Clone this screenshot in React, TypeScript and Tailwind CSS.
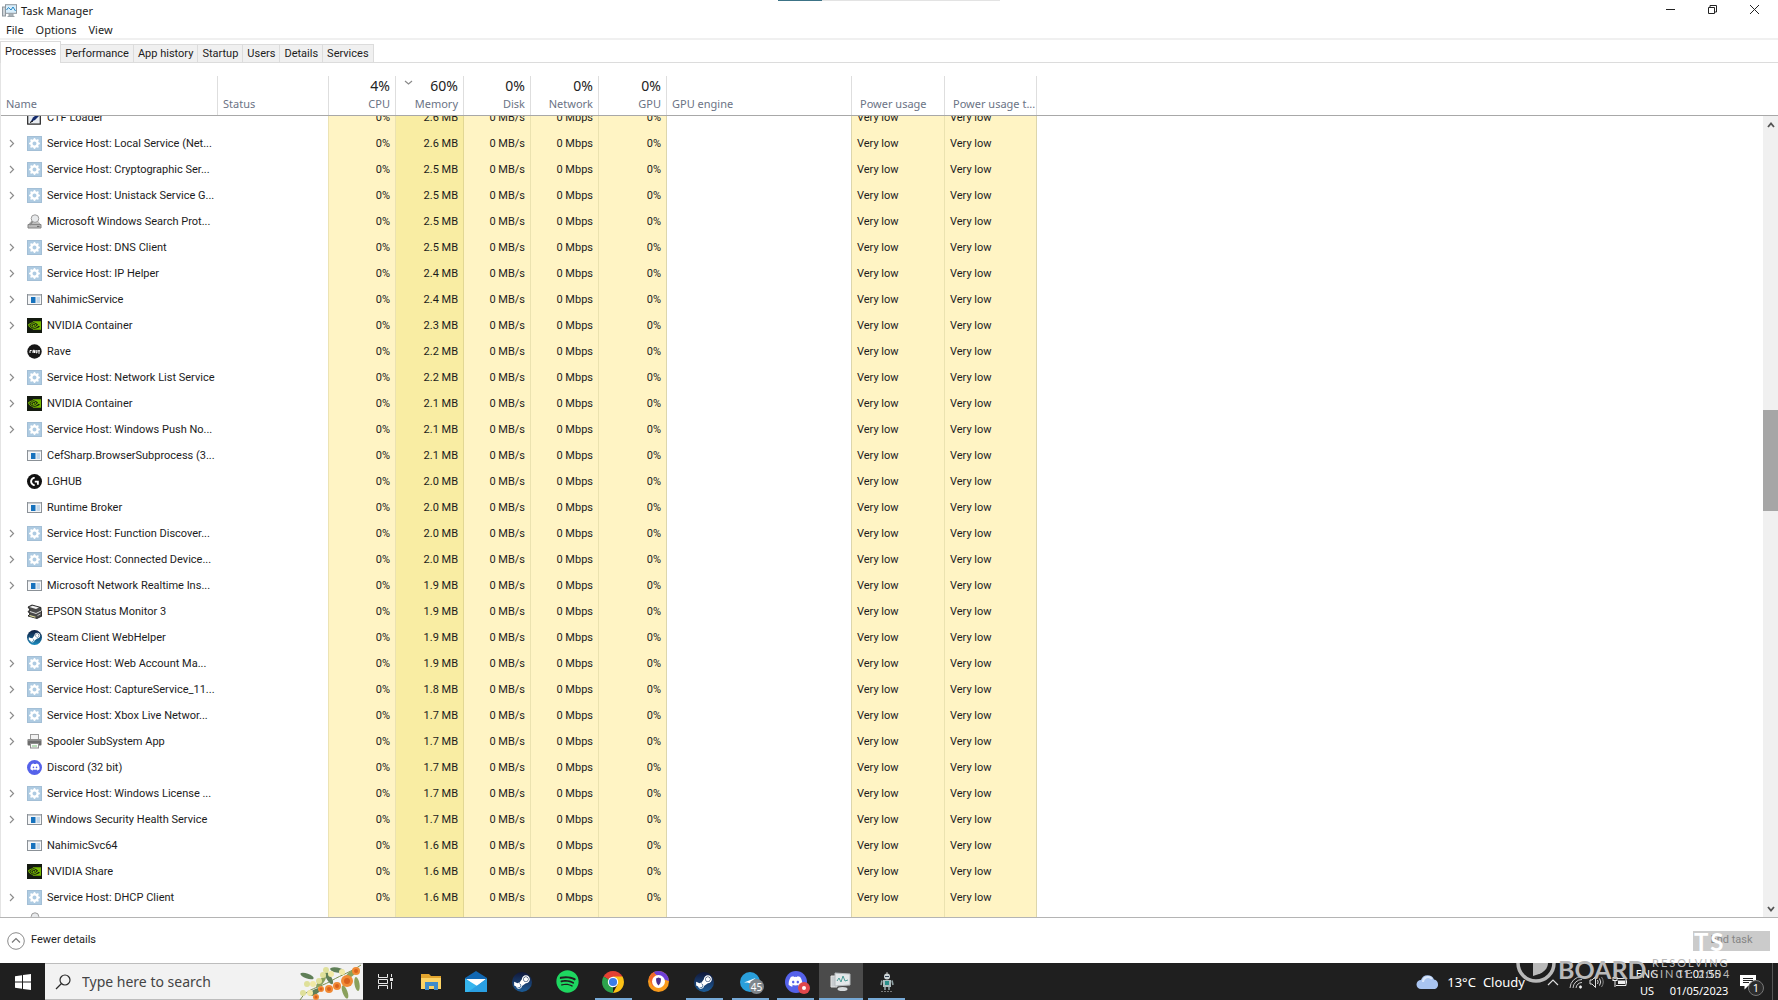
import { useLayoutEffect, useRef, useState } from "react";
import type { ReactNode } from "react";
import { BsGearFill } from "react-icons/bs";
import { FaDiscord, FaSpotify, FaSteamSymbol } from "react-icons/fa";
import { SiLogitechg, SiNvidia } from "react-icons/si";

type IconName =
  | "gear" | "app" | "nvidia" | "rave" | "lghub" | "search" | "ctf"
  | "epson" | "steam" | "printer" | "discord";

type Process = { name: string; icon: IconName; memory: string; group?: boolean };

const processes: Process[] = [
  { name: "CTF Loader", icon: "ctf", memory: "2.6 MB" },
  { name: "Service Host: Local Service (Net...", icon: "gear", memory: "2.6 MB", group: true },
  { name: "Service Host: Cryptographic Ser...", icon: "gear", memory: "2.5 MB", group: true },
  { name: "Service Host: Unistack Service G...", icon: "gear", memory: "2.5 MB", group: true },
  { name: "Microsoft Windows Search Prot...", icon: "search", memory: "2.5 MB" },
  { name: "Service Host: DNS Client", icon: "gear", memory: "2.5 MB", group: true },
  { name: "Service Host: IP Helper", icon: "gear", memory: "2.4 MB", group: true },
  { name: "NahimicService", icon: "app", memory: "2.4 MB", group: true },
  { name: "NVIDIA Container", icon: "nvidia", memory: "2.3 MB", group: true },
  { name: "Rave", icon: "rave", memory: "2.2 MB" },
  { name: "Service Host: Network List Service", icon: "gear", memory: "2.2 MB", group: true },
  { name: "NVIDIA Container", icon: "nvidia", memory: "2.1 MB", group: true },
  { name: "Service Host: Windows Push No...", icon: "gear", memory: "2.1 MB", group: true },
  { name: "CefSharp.BrowserSubprocess (3...", icon: "app", memory: "2.1 MB" },
  { name: "LGHUB", icon: "lghub", memory: "2.0 MB" },
  { name: "Runtime Broker", icon: "app", memory: "2.0 MB" },
  { name: "Service Host: Function Discover...", icon: "gear", memory: "2.0 MB", group: true },
  { name: "Service Host: Connected Device...", icon: "gear", memory: "2.0 MB", group: true },
  { name: "Microsoft Network Realtime Ins...", icon: "app", memory: "1.9 MB", group: true },
  { name: "EPSON Status Monitor 3", icon: "epson", memory: "1.9 MB" },
  { name: "Steam Client WebHelper", icon: "steam", memory: "1.9 MB" },
  { name: "Service Host: Web Account Ma...", icon: "gear", memory: "1.9 MB", group: true },
  { name: "Service Host: CaptureService_11...", icon: "gear", memory: "1.8 MB", group: true },
  { name: "Service Host: Xbox Live Networ...", icon: "gear", memory: "1.7 MB", group: true },
  { name: "Spooler SubSystem App", icon: "printer", memory: "1.7 MB", group: true },
  { name: "Discord (32 bit)", icon: "discord", memory: "1.7 MB" },
  { name: "Service Host: Windows License ...", icon: "gear", memory: "1.7 MB", group: true },
  { name: "Windows Security Health Service", icon: "app", memory: "1.7 MB", group: true },
  { name: "NahimicSvc64", icon: "app", memory: "1.6 MB" },
  { name: "NVIDIA Share", icon: "nvidia", memory: "1.6 MB" },
  { name: "Service Host: DHCP Client", icon: "gear", memory: "1.6 MB", group: true },
];

const usage = [
  { label: "CPU", total: "4%" },
  { label: "Memory", total: "60%" },
  { label: "Disk", total: "0%" },
  { label: "Network", total: "0%" },
  { label: "GPU", total: "0%" },
];

const tabs = ["Processes", "Performance", "App history", "Startup", "Users", "Details", "Services"];

function ProcessIcon({ name }: { name: IconName }) {
  switch (name) {
    case "gear":
      return (
        <span className="flex size-[15px] shrink-0 items-center justify-center border border-[#a3bfd6] bg-[#aecbe2] text-white">
          <BsGearFill size={11} />
        </span>
      );
    case "nvidia":
      return (
        <span className="flex size-[15px] shrink-0 items-center justify-center bg-[#141a10] text-[#76b900]">
          <SiNvidia size={13} />
        </span>
      );
    case "lghub":
      return (
        <span className="flex size-[15px] shrink-0 items-center justify-center rounded-full bg-[#111] text-white">
          <SiLogitechg size={9} />
        </span>
      );
    case "steam":
      return (
        <span className="flex size-[15px] shrink-0 items-center justify-center rounded-full bg-linear-to-b from-[#0b1b3d] to-[#1b8dc0] text-white">
          <FaSteamSymbol size={13} />
        </span>
      );
    case "discord":
      return (
        <span className="flex size-[15px] shrink-0 items-center justify-center rounded-full bg-[#5562ea] text-white">
          <FaDiscord size={10} />
        </span>
      );
    case "app":
      return (
        <svg className="shrink-0" width="15" height="15" viewBox="0 0 15 15">
          <rect x="0.5" y="2.5" width="14" height="10" fill="#f4f6f8" stroke="#8b9197" />
          <rect x="1" y="2" width="13" height="1.6" fill="#a7adb3" />
          <rect x="4" y="5" width="4.5" height="6" fill="#1672bd" />
          <path d="M9.5 6h3.5M9.5 8h3.5M9.5 10h3.5" stroke="#8fb8dc" />
        </svg>
      );
    case "rave":
      return (
        <svg className="shrink-0" width="15" height="15" viewBox="0 0 15 15">
          <circle cx="7.5" cy="7.5" r="7.2" fill="#161616" />
          <path d="M3 9V6.5h1.6M6 9V6.3h1.5V9M6 7.8h1.5M9 6v2.8h1V6M11.2 6.5h1.6M11.2 7.7h1.6M11.2 9h1.6" fill="none" stroke="#fff" strokeWidth="1" />
        </svg>
      );
    case "search":
      return (
        <svg className="shrink-0" width="15" height="15" viewBox="0 0 15 15">
          <path d="M1 10.5h13v3.5H1z" fill="#b9b9b9" stroke="#828282" />
          <path d="M2 10l2-2.5h7L13 10z" fill="#c9c9c9" stroke="#999" strokeWidth="0.5" />
          <circle cx="8" cy="4.6" r="3.8" fill="#e8eaec" stroke="#9a9a9a" />
          <path d="M5.5 7.5L3 11" stroke="#8a8a8a" strokeWidth="1.6" />
          <path d="M10 12.4h2.5" stroke="#666" />
        </svg>
      );
    case "ctf":
      return (
        <svg className="shrink-0" width="15" height="15" viewBox="0 0 15 15">
          <rect x="0.7" y="0.7" width="12.6" height="13.4" fill="#e9edf2" stroke="#222" strokeWidth="1.2" />
          <path d="M14.5 1L6 7.5 3.5 12 8 10l7-7z" fill="#132a6b" />
          <path d="M3 12.5l3-1.5" stroke="#000" />
        </svg>
      );
    case "epson":
      return (
        <svg className="shrink-0" width="15" height="15" viewBox="0 0 15 15">
          <path d="M1 3l4-2 9 2.5v3L15 8v4l-5 2.5L1 12l2-2-2-2.5 2-1.5z" fill="#4a4a4a" stroke="#111" strokeWidth="0.8" />
          <path d="M2.5 3l3-1.2L12 3.6 9 5z" fill="#f2f2f2" />
          <path d="M3 7.5l6 2 5-2.5" fill="none" stroke="#ddd" />
          <path d="M2.5 11.5l6 1.8" stroke="#e4e4a0" strokeWidth="1.2" />
          <path d="M10.5 11.5l3-1.5" stroke="#bbb" />
        </svg>
      );
    case "printer":
      return (
        <svg className="shrink-0" width="15" height="15" viewBox="0 0 15 15">
          <rect x="3.5" y="0.5" width="8" height="5" fill="#f3f3f3" stroke="#9b9b9b" />
          <rect x="0.5" y="5" width="14" height="6.5" rx="1" fill="#6d6d6d" />
          <rect x="1" y="5" width="13" height="2" fill="#8f8f8f" />
          <rect x="3.5" y="9.5" width="8" height="4.5" fill="#fafafa" stroke="#8d8d8d" />
          <path d="M5 12h5" stroke="#7ac27a" />
        </svg>
      );
  }
}

function MonitorIcon() {
  return (
    <svg width="15" height="14" viewBox="0 0 15 14">
      <rect x="0.5" y="3" width="3" height="9" fill="#cfd4d8" stroke="#8e979e" />
      <rect x="3.5" y="0.7" width="11" height="8.6" fill="#d9eefb" stroke="#8e979e" />
      <path d="M4.5 6l2-2.5 2.5 2.5L11 3l2.5 4" fill="none" stroke="#2587c4" />
      <path d="M7 10h4v2H7zM5.5 12.5h7" fill="#b9c0c5" stroke="#9aa3a9" />
    </svg>
  );
}

function TitleBar() {
  return (
    <div className="relative flex h-[22px] items-center pl-0.5">
      <MonitorIcon />
      <span className="ml-1 text-[11px] leading-4">Task Manager</span>
      <div className="absolute top-0 left-1/2 flex h-px w-[222px] -translate-x-1/2 bg-[#e3e3e3]">
        <div className="w-11 bg-[#3c7386]" />
      </div>
      <div className="ml-auto flex h-full items-start pr-[3px]">
        <button aria-label="Minimize" className="flex h-[18px] w-[42px] items-center justify-center">
          <svg width="11" height="11" viewBox="0 0 11 11"><path d="M1 5.5h9" stroke="#222" /></svg>
        </button>
        <button aria-label="Restore" className="flex h-[18px] w-[42px] items-center justify-center">
          <svg width="11" height="11" viewBox="0 0 11 11" fill="none" stroke="#222">
            <path d="M1.5 3.5h6v6h-6zM3 3V1.5h6.5V8H8" />
          </svg>
        </button>
        <button aria-label="Close" className="flex h-[18px] w-[42px] items-center justify-center">
          <svg width="11" height="11" viewBox="0 0 11 11"><path d="M1 1l9 9M10 1l-9 9" stroke="#222" /></svg>
        </button>
      </div>
    </div>
  );
}

function Tabs() {
  const [active, setActive] = useState("Processes");
  return (
    <div role="tablist" className="flex h-[23px] items-end border-b border-[#dcdcdc] font-[Roboto,sans-serif] text-[11px]">
      {tabs.map((tab) => (
        <button
          key={tab}
          role="tab"
          aria-selected={tab === active}
          onClick={() => setActive(tab)}
          className={
            tab === active
              ? "-mb-px h-[22px] border border-b-0 border-[#dcdcdc] bg-white px-1 pb-0.5 leading-4"
              : "h-[18px] border-t border-r border-[#dcdcdc] bg-[#f0f0f0] px-1 leading-4"
          }
        >
          {tab}
        </button>
      ))}
    </div>
  );
}

const headCell = "sticky top-0 z-10 h-[53px] border-b border-[#a8a8a8] bg-white p-0 align-bottom font-normal text-[#6b7385]";
const headInner = "flex h-[39px] flex-col justify-end border-r border-[#dedede] pb-[3px] leading-4";

function ProcessTable() {
  const scroller = useRef<HTMLDivElement>(null);

  useLayoutEffect(() => {
    if (scroller.current) scroller.current.scrollTop = 12;
  }, []);

  return (
    <div className="flex min-h-0 flex-1 border-b border-[#b4b4b4]">
      <div ref={scroller} className="min-w-0 flex-1 overflow-hidden border-l border-[#e4e4e4]">
        <table className="w-full table-fixed border-separate border-spacing-0 text-[11px]">
          <colgroup>
            <col className="w-[217px]" />
            <col className="w-[111px]" />
            <col className="w-[67px]" />
            <col className="w-[68px]" />
            <col className="w-[67px]" />
            <col className="w-[68px]" />
            <col className="w-[68px]" />
            <col className="w-[185px]" />
            <col className="w-[93px]" />
            <col className="w-[92px]" />
            <col />
          </colgroup>
          <thead>
            <tr>
              <th className={headCell}><div className={`${headInner} pl-[5px] text-left`}>Name</div></th>
              <th className={headCell}><div className={`${headInner} pl-[5px] text-left`}>Status</div></th>
              {usage.map((u) => (
                <th key={u.label} className={headCell}>
                  <div className={`${headInner} relative pr-[5px] text-right`}>
                    {u.label === "Memory" && (
                      <svg className="absolute top-1 left-2" width="9" height="6" viewBox="0 0 9 6">
                        <path d="M1 1l3.5 3L8 1" fill="none" stroke="#8a8a8a" strokeWidth="1.2" />
                      </svg>
                    )}
                    <span className="text-[14px] leading-5 text-[#222]">{u.total}</span>
                    {u.label}
                  </div>
                </th>
              ))}
              <th className={headCell}><div className={`${headInner} pl-[5px] text-left`}>GPU engine</div></th>
              <th className={headCell}><div className={`${headInner} pl-2 text-left`}>Power usage</div></th>
              <th className={headCell}><div className={`${headInner} pl-2 text-left`}>Power usage t...</div></th>
              <th className={headCell} />
            </tr>
          </thead>
          <tbody className="font-[Roboto,sans-serif] text-[#1c1c1c]">
            {processes.map((p, i) => (
              <tr key={i} className="h-[26px]">
                <td className="p-0">
                  <div className="flex h-[26px] items-center whitespace-nowrap">
                    <span className="flex w-[26px] shrink-0 pl-2">
                      {p.group && (
                        <button aria-label={`Expand ${p.name}`}>
                          <svg width="6" height="9" viewBox="0 0 6 9">
                            <path d="M1 1l3.5 3.5L1 8" fill="none" stroke="#8d8d8d" strokeWidth="1.2" />
                          </svg>
                        </button>
                      )}
                    </span>
                    <ProcessIcon name={p.icon} />
                    <span className="ml-[5px] pt-0.5">{p.name}</span>
                  </div>
                </td>
                <td className="border-r border-[#ece3b4] p-0" />
                <td className="border-r border-[#ebe2b0] bg-[#fff4c4] p-0 pt-0.5 pr-[5px] text-right">0%</td>
                <td className="border-r border-[#e2d793] bg-[#f9eda3] p-0 pt-0.5 pr-[5px] text-right">{p.memory}</td>
                <td className="border-r border-[#ebe2b0] bg-[#fff4c4] p-0 pt-0.5 pr-[5px] text-right">0 MB/s</td>
                <td className="border-r border-[#ebe2b0] bg-[#fff4c4] p-0 pt-0.5 pr-[5px] text-right">0 Mbps</td>
                <td className="border-r border-[#ddd6ac] bg-[#fff4c4] p-0 pt-0.5 pr-[5px] text-right">0%</td>
                <td className="border-r border-[#ddd6ac] p-0" />
                <td className="border-r border-[#ebe2b0] bg-[#fff4c4] p-0 pt-0.5 pl-[5px]">Very low</td>
                <td className="border-r border-[#ddd6ac] bg-[#fff4c4] p-0 pt-0.5 pl-[5px]">Very low</td>
                <td className="p-0" />
              </tr>
            ))}
            {/* next row, only its top edge is in view */}
            <tr className="h-[26px]">
              <td className="p-0 align-top"><div className="flex pt-0.5 pl-[26px]"><ProcessIcon name="search" /></div></td>
              <td className="border-r border-[#ece3b4] p-0" />
              <td className="border-r border-[#ebe2b0] bg-[#fff4c4] p-0" />
              <td className="border-r border-[#e2d793] bg-[#f9eda3] p-0" />
              <td className="border-r border-[#ebe2b0] bg-[#fff4c4] p-0" />
              <td className="border-r border-[#ebe2b0] bg-[#fff4c4] p-0" />
              <td className="border-r border-[#ddd6ac] bg-[#fff4c4] p-0" />
              <td className="border-r border-[#ddd6ac] p-0" />
              <td className="border-r border-[#ebe2b0] bg-[#fff4c4] p-0" />
              <td className="border-r border-[#ddd6ac] bg-[#fff4c4] p-0" />
              <td className="p-0" />
            </tr>
          </tbody>
        </table>
      </div>
      <div className="flex w-[15px] flex-col">
        <div className="h-[53px] border-b border-[#a8a8a8]" />
        <div className="flex flex-1 flex-col bg-[#f0f0f0]">
          <button aria-label="Scroll up" className="flex h-[17px] items-center justify-center">
            <svg width="8" height="6" viewBox="0 0 8 6"><path d="M1 5l3-3.5L7 5" fill="none" stroke="#555" strokeWidth="1.8" /></svg>
          </button>
          <div className="grow-[277]" />
          <div className="grow-[101] bg-[#a6a6a6]" />
          <div className="grow-[389]" />
          <button aria-label="Scroll down" className="flex h-[17px] items-center justify-center">
            <svg width="8" height="6" viewBox="0 0 8 6"><path d="M1 1l3 3.5L7 1" fill="none" stroke="#555" strokeWidth="1.8" /></svg>
          </button>
        </div>
      </div>
    </div>
  );
}

function Flowers() {
  const leaves = [[8, 12, 20], [22, 18, -50], [38, 6, 10], [46, 28, 70], [16, 28, -30], [52, 10, -40], [30, 14, 60], [58, 20, 80]];
  const orange = [[48, 17, 6], [38, 22, 4], [30, 25, 4], [22, 25, 3], [17, 33, 3], [57, 7, 4]];
  const cream = [[8, 20], [14, 20], [4, 29], [11, 29], [27, 6], [32, 10], [24, 11], [43, 8], [20, 17]];
  return (
    <svg className="shrink-0" width="64" height="36" viewBox="0 0 64 36">
      <path d="M1 36C8 24 20 24 32 17S52 8 62 1" fill="none" stroke="#7d8f4e" />
      {leaves.map(([x, y, r], i) => (
        <ellipse key={i} cx={x} cy={y} rx="7" ry="2.5" fill={i % 2 ? "#8aa05c" : "#5f7f57"} transform={`rotate(${r} ${x} ${y})`} />
      ))}
      {cream.map(([x, y], i) => (
        <circle key={i} cx={x} cy={y} r="3" fill={i % 2 ? "#f1e9a5" : "#dfe09a"} />
      ))}
      {orange.map(([x, y, r], i) => (
        <g key={i}>
          <circle cx={x} cy={y} r={r} fill="#f08a35" />
          <circle cx={x} cy={y} r={r / 2} fill="#d8601c" />
        </g>
      ))}
    </svg>
  );
}

function SteamBadge() {
  return (
    <span className="flex size-5 items-center justify-center rounded-full bg-linear-to-b from-[#10183a] to-[#1a5d99] text-white">
      <FaSteamSymbol size={18} />
    </span>
  );
}

function TaskButton({ label, running, active, children }: { label: string; running?: boolean; active?: boolean; children: ReactNode }) {
  return (
    <button
      aria-label={label}
      className={`relative flex h-full w-11 items-center justify-center ${active ? "bg-[#4b4b4b]" : ""}`}
    >
      {children}
      {running && <span className={`absolute bottom-0 h-0.5 bg-[#76a9d6] ${active ? "w-full" : "w-[37px]"}`} />}
    </button>
  );
}

function TaskbarApps() {
  return (
    <div className="flex h-full w-[546px] justify-between">
      <TaskButton label="Task View">
        <svg width="17" height="15" viewBox="0 0 17 15" fill="none" stroke="#e8e8e8">
          <path d="M1.5 0v3.5h9V0M1.5 15v-3.5h9V15M1.5 5.5h9v4h-9zM14.5 0v3M14.5 8v7" />
          <rect x="13.5" y="4.5" width="2" height="2" fill="#e8e8e8" />
        </svg>
      </TaskButton>
      <TaskButton label="File Explorer">
        <svg width="20" height="18" viewBox="0 0 20 18">
          <path d="M0 1h8l2 2h10v13H0z" fill="#e3a52e" />
          <path d="M0 5h20v11H0z" fill="#fcd365" />
          <path d="M4 9h13v8h-4v-4H8v4H4z" fill="#3f8ccb" />
        </svg>
      </TaskButton>
      <TaskButton label="Mail">
        <svg width="22" height="21" viewBox="0 0 22 21">
          <path d="M0 7l11-7 11 7v14H0z" fill="#1167b1" />
          <path d="M1 8h20l-10 8z" fill="#fff" />
          <path d="M0 7.5L22 21H0z" fill="#35b5ee" />
          <path d="M22 7.5V21H3z" fill="#2a9fe2" />
        </svg>
      </TaskButton>
      <TaskButton label="Steam"><SteamBadge /></TaskButton>
      <TaskButton label="Spotify"><FaSpotify size={23} color="#1ed760" /></TaskButton>
      <TaskButton label="Google Chrome" running>
        <svg width="22" height="22" viewBox="0 0 22 22">
          <path d="M11 11L1.5 5.5A11 11 0 0 1 20.5 5.5z" fill="#e24133" />
          <path d="M11 11L1.5 5.5A11 11 0 0 0 11 22z" fill="#2da24c" />
          <path d="M11 5.5h9.5A11 11 0 0 1 11 22l4.5-8.5z" fill="#fbc116" />
          <circle cx="11" cy="11" r="5.2" fill="#fff" />
          <circle cx="11" cy="11" r="4.1" fill="#3b7de9" />
        </svg>
      </TaskButton>
      <TaskButton label="Secure Browser">
        <svg width="21" height="21" viewBox="0 0 21 21">
          <circle cx="10.5" cy="10.5" r="10.5" fill="#f89a1c" />
          <path d="M5 1.5A10.5 10.5 0 0 1 21 10L14 8z" fill="#6e3fd6" />
          <path d="M1 8A10 10 0 0 1 6 1l3 6-4 9z" fill="#f2662b" />
          <circle cx="10.5" cy="10.5" r="6.5" fill="#fff" />
          <path d="M8 7.5l2.5-1 2.5 1c0 4-1 5.5-2.5 7C9 13 8 11.5 8 7.5z" fill="#4b2d8c" />
        </svg>
      </TaskButton>
      <TaskButton label="Steam window" running><SteamBadge /></TaskButton>
      <TaskButton label="Telegram" running>
        <svg width="20" height="20" viewBox="0 0 20 20">
          <circle cx="10" cy="10" r="10" fill="#2a9fdb" />
          <path d="M4 10.5L15.5 6l-5 5.5-3-1z" fill="#fff" />
        </svg>
        <span className="absolute right-2 bottom-1.5 flex size-[15px] items-center justify-center rounded-full bg-[#80868b] text-[10px] leading-none text-white">45</span>
      </TaskButton>
      <TaskButton label="Discord" running>
        <span className="flex size-[22px] items-center justify-center rounded-full bg-[#5562ea] text-white"><FaDiscord size={15} /></span>
        <span className="absolute right-2 bottom-1.5 flex size-3 items-center justify-center rounded-full bg-[#e0474c]">
          <span className="size-1 rounded-full bg-white" />
        </span>
      </TaskButton>
      <TaskButton label="Task Manager" running active>
        <svg width="22" height="20" viewBox="0 0 22 20">
          <path d="M1 4h6v11H1z" fill="#c8cccf" stroke="#e4e4e4" />
          <path d="M5 1l15 1v11L5 14z" fill="#e3e7e9" stroke="#b4b9bc" />
          <path d="M7 9l2-3 2 4 2-6 2 5 3-1" fill="none" stroke="#4c9b96" />
          <ellipse cx="12.5" cy="17" rx="5" ry="2" fill="#d5d9db" />
        </svg>
      </TaskButton>
      <TaskButton label="Robot" running>
        <svg width="16" height="20" viewBox="0 0 16 20">
          <path d="M8 0v2" stroke="#bbb" />
          <circle cx="8" cy="4.5" r="3" fill="#cfd6d8" />
          <path d="M6 4.5h4" stroke="#345" />
          <path d="M4 8h8v7H4z" fill="#aebdbf" />
          <path d="M6 9h4v4H6z" fill="#2b8f8a" />
          <path d="M3 8.5L2 13M13 8.5l1 4.5M6 15v3M10 15v3" stroke="#8fa0a3" strokeWidth="1.6" />
          <path d="M2 19.5h12" stroke="#777" strokeDasharray="2 1" />
        </svg>
      </TaskButton>
    </div>
  );
}

function Tray() {
  return (
    <div className="ml-auto flex h-full items-center text-white">
      <button className="flex items-center text-[13px] leading-5">
        <svg width="24" height="16" viewBox="0 0 24 16">
          <path d="M5 15a4.5 4.5 0 0 1 0-9A7 7 0 0 1 18 5.5a5 5 0 0 1 1 9.5z" fill="#a9c4f0" />
          <path d="M7 8a5 5 0 0 1 9-3" fill="none" stroke="#dbe7fb" strokeWidth="2" />
        </svg>
        <span className="ml-[7px]">13°C</span>
        <span className="ml-[7px]">Cloudy</span>
      </button>
      <button aria-label="Show hidden icons" className="ml-[22px]">
        <svg width="12" height="8" viewBox="0 0 12 8"><path d="M1 7l5-5 5 5" fill="none" stroke="#ddd" strokeWidth="1.2" /></svg>
      </button>
      <button aria-label="Network" className="ml-2.5">
        <svg width="14" height="14" viewBox="0 0 14 14" fill="none" stroke="#ccc">
          <path d="M1 13A12 12 0 0 1 13 1.5M4 13a9 9 0 0 1 9-8.5M7 13a6 6 0 0 1 6-5.5" />
          <circle cx="11.5" cy="12" r="1.2" fill="#fff" />
        </svg>
      </button>
      <button aria-label="Volume" className="ml-1.5">
        <svg width="15" height="14" viewBox="0 0 15 14" fill="none" stroke="#ddd">
          <path d="M1 5h2l3.5-3.5v11L3 9H1z" />
          <path d="M8.5 5q1.3 2 0 4M10.5 3.5q2.5 3.5 0 7" />
          <path d="M12.5 2q3.5 5 0 10" stroke="#888" />
        </svg>
      </button>
      <button aria-label="Battery" className="ml-2">
        <svg width="16" height="12" viewBox="0 0 16 12" fill="none" stroke="#eee">
          <path d="M5 2.5h9v7H4M14.5 4.5v3M3 5v6" />
          <rect x="1" y="1.5" width="4" height="3" />
          <path d="M6 4.5h7v3.5H6z" fill="#eee" stroke="none" />
        </svg>
      </button>
      <button className="ml-1 w-[30px] text-center text-[11px] leading-[17px]">ENG<br />US</button>
      <button className="ml-1.5 w-[62px] text-center text-[11px] leading-[17px]">11:01:55<br />01/05/2023</button>
      <button aria-label="Notifications" className="relative ml-2.5 w-6">
        <svg width="16" height="16" viewBox="0 0 16 16">
          <path d="M0 1h16v11H8l-3.5 3.5V12H0z" fill="#fff" />
          <path d="M3 4.5h10M3 6.5h10M3 8.5h6" stroke="#222" />
        </svg>
        <span className="absolute top-1.5 left-2 flex size-4 items-center justify-center rounded-full border border-[#777] bg-[#2c2c2c] text-[11px] leading-none">1</span>
      </button>
      <div className="ml-2 h-full w-1.5 border-l border-[#555]" />
    </div>
  );
}

function Watermark() {
  return (
    <div aria-hidden="true" className="pointer-events-none absolute right-0 bottom-0 h-[68px] w-[262px] font-['Lato','Noto_Sans',sans-serif] text-[#b9b9b9]">
      <svg className="absolute bottom-0 left-0" width="44" height="37" viewBox="0 0 44 37">
        <path d="M2 0a18 18 0 0 0 36 0" fill="none" stroke="#b9b9b9" strokeWidth="3.5" />
        <path d="M17 0h15c0 5-4 9-9 11l-6 2z" fill="#b9b9b9" />
      </svg>
      <span className="absolute top-[23px] left-[42px] text-[25px] leading-7 font-bold">BOARD</span>
      <span className="absolute top-[25px] left-[136px] text-[11px] leading-[11px] tracking-[2px] whitespace-nowrap">
        RESOLVING<br />SINCE 2004
      </span>
      <span className="absolute top-0 left-[178px] text-[24px] leading-5 font-bold tracking-[2px] text-white">TS</span>
    </div>
  );
}

export default function App() {
  return (
    <div className="relative flex h-screen flex-col overflow-hidden bg-white font-['Noto_Sans','Open_Sans',sans-serif] text-[#1c1c1c]">
      <TitleBar />
      <nav className="flex h-[18px] items-center gap-3 border-b-2 border-[#f0f0f0] pl-1.5 text-[11px] leading-4">
        <button>File</button>
        <button>Options</button>
        <button>View</button>
      </nav>
      <Tabs />
      <ProcessTable />
      <footer className="flex h-[45px] shrink-0 items-center justify-between pr-2 pl-[7px] font-[Roboto,sans-serif] text-[11px]">
        <button className="flex items-center gap-1.5">
          <svg width="18" height="18" viewBox="0 0 18 18" fill="none">
            <circle cx="9" cy="9" r="8.3" stroke="#8a8a8a" />
            <path d="M5 10.5l4-4 4 4" stroke="#777" strokeWidth="1.2" />
          </svg>
          Fewer details
        </button>
        <button disabled className="h-5 w-[77px] bg-[#cbcbcb] text-[#858585]">End task</button>
      </footer>
      <div className="flex h-[37px] shrink-0 items-center bg-[#1f1f1f]">
        <button aria-label="Start" className="flex h-full w-[45px] items-center justify-center">
          <svg width="16" height="16" viewBox="0 0 16 16" fill="#fff">
            <path d="M0 2.3L7 1.3V7.5H0zM8 1.1L16 0V7.5H8zM0 8.5h7v6.2L0 13.7zM8 8.5h8V16L8 14.9z" />
          </svg>
        </button>
        <label className="flex h-full w-[318px] items-center border-y border-[#bdbdbd] bg-[#f2f2f2] pl-2.5">
          <svg width="16" height="16" viewBox="0 0 16 16" fill="none" stroke="#2a2a2a" strokeWidth="1.2">
            <circle cx="10" cy="6" r="5" /><path d="M6.5 9.5L1 15" />
          </svg>
          <input
            aria-label="Search"
            placeholder="Type here to search"
            className="ml-[11px] min-w-0 flex-1 bg-transparent text-[14px] outline-none placeholder:text-[#444]"
          />
          <Flowers />
        </label>
        <TaskbarApps />
        <Tray />
      </div>
      <Watermark />
    </div>
  );
}
